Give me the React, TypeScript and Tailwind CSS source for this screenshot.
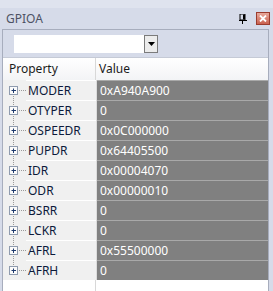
import React from "react";

const rows: [string, string][] = [
  ["MODER", "0xA940A900"],
  ["OTYPER", "0"],
  ["OSPEEDR", "0x0C000000"],
  ["PUPDR", "0x64405500"],
  ["IDR", "0x00004070"],
  ["ODR", "0x00000010"],
  ["BSRR", "0"],
  ["LCKR", "0"],
  ["AFRL", "0x55500000"],
  ["AFRH", "0"],
];

function Gutter({ first, last }: { first: boolean; last: boolean }) {
  return (
    <svg width="23" height="20" viewBox="0 0 23 20" className="block shrink-0">
      <line
        x1="10.5"
        y1={first ? 10 : 0}
        x2="10.5"
        y2={last ? 10 : 20}
        stroke="#9a9a9a"
        strokeDasharray="1 1"
      />
      <line x1="14" y1="10.5" x2="23" y2="10.5" stroke="#9a9a9a" strokeDasharray="1 1" />
      <rect x="6.5" y="6.5" width="8" height="8" fill="#fbfbfb" stroke="#8f9bae" />
      <line x1="8.5" y1="10.5" x2="13" y2="10.5" stroke="#1f3a6e" />
      <line x1="10.5" y1="8.5" x2="10.5" y2="13" stroke="#1f3a6e" />
    </svg>
  );
}

export default function App() {
  return (
    <div className="w-[273px] h-[291px] bg-[#d6dbe9] flex flex-col overflow-hidden font-['Segoe_UI','Noto_Sans',sans-serif]">
      <div className="h-[8px] bg-[#dfe3ee] shrink-0" />
      <div className="h-[21px] shrink-0 flex items-center pl-[6px] pr-[3px] text-[12px] text-[#4d5264]">
        <span className="leading-none">GPIOA</span>
        <div className="ml-auto flex items-center gap-[9px]">
          <svg width="8" height="10" viewBox="0 0 8 10" className="block">
            <rect x="1" y="0" width="5" height="6" fill="none" stroke="#000" strokeWidth="1" />
            <rect x="4" y="0.5" width="2" height="5" fill="#000" />
            <line x1="0" y1="6.5" x2="8" y2="6.5" stroke="#000" />
            <line x1="3.5" y1="7" x2="3.5" y2="10" stroke="#000" />
          </svg>
          <div className="w-[14px] h-[13px] border border-[#9b3b2d] bg-gradient-to-b from-[#e7a89b] to-[#c9614f] flex items-center justify-center">
            <svg width="8" height="7" viewBox="0 0 8 7" className="block">
              <path d="M1 0.5 L7 6.5 M7 0.5 L1 6.5" stroke="#fff" strokeWidth="1.8" />
            </svg>
          </div>
        </div>
      </div>
      <div className="flex-1 flex flex-col ml-[2px] mr-[4px] border-l border-t border-r border-[#a7adbd] bg-white min-h-0">
        <div className="h-[27px] shrink-0 bg-[#d6dbe9] flex items-center pl-[11px] pt-[1px]">
          <div className="w-[130px] h-[18px] bg-white" />
          <div className="w-[14px] h-[18px] border border-[#7b7b7b] bg-[#ececec] flex items-center justify-center">
            <svg width="7" height="4" viewBox="0 0 7 4" className="block">
              <path d="M0 0 H7 L3.5 4 Z" fill="#000" />
            </svg>
          </div>
        </div>
        <div className="h-[23px] shrink-0 flex bg-gradient-to-b from-[#ffffff] to-[#f3f4f6] border-t border-[#c5cad6] text-[12px] text-[#1b1b1b]">
          <div className="w-[93px] flex items-center pl-[6px] border-r border-[#d8d8d8]">Property</div>
          <div className="flex-1 flex items-center pl-[3px]">Value</div>
        </div>
        {rows.map(([name, value], i) => (
          <div key={name} className="h-[20px] shrink-0 flex text-[12px]">
            <div className="bg-[#f0f0f0]">
              <Gutter first={i === 0} last={i === rows.length - 1} />
            </div>
            <div className="w-[70px] bg-[#f0f0f0] border-t border-white flex items-center pl-[2px] text-[#0c1a3a]">
              <span className="leading-none">{name}</span>
            </div>
            <div className="w-px bg-[#dcdcdc]" />
            <div className="flex-1 bg-[#808080] border-t border-[#a9a9a9] flex items-center pl-[3px] text-white">
              <span className="leading-none">{value}</span>
            </div>
          </div>
        ))}
        <div className="flex-1 flex">
          <div className="w-[93px] border-r border-[#d8d8d8]" />
          <div className="flex-1" />
        </div>
      </div>
    </div>
  );
}
